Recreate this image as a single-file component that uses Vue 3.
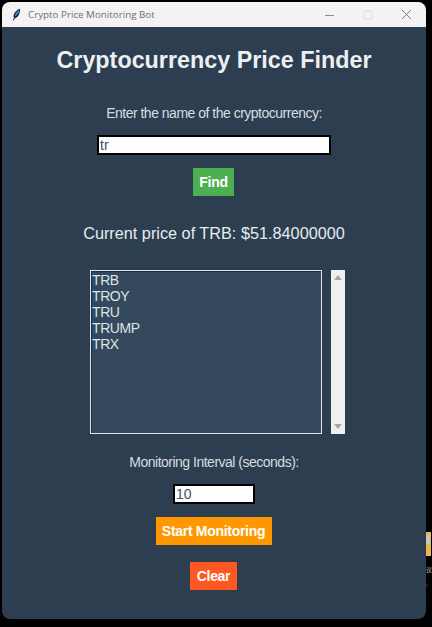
<script setup>
import { ref } from 'vue'

const query = ref('tr')
const interval = ref('10')
const symbols = ['TRB', 'TROY', 'TRU', 'TRUMP', 'TRX']
</script>

<template>
  <div class="desktop">
    <div class="window">
      <div class="titlebar">
        <svg class="feather" width="9" height="13" viewBox="1 0 10 16">
          <path d="M10.5 0.8C7 1.6 3.6 4.6 2.6 8.4 2.2 10 2.4 11.2 2.9 12L1.6 15.2 2.7 15.4 3.9 12.5C6.4 12.4 8.4 10.2 9.4 7.2 10 5.2 10.6 3 10.5 0.8Z" fill="#10233f" />
          <path d="M9.6 2C7 3.4 4.2 6 3.5 10.6 6 9.8 8.2 7.4 9 5Z" fill="#3f7fd0" />
        </svg>
        <span class="wintitle">Crypto Price Monitoring Bot</span>
        <div class="winbtns">
          <svg width="10" height="10" viewBox="0 0 10 10"><path d="M0 5.5H9" stroke="#8b8b8b" stroke-width="1" fill="none" /></svg>
          <svg width="10" height="10" viewBox="0 0 10 10"><rect x="1" y="1" width="8" height="8" rx="1" stroke="#dcdcdc" fill="none" /></svg>
          <svg width="11" height="11" viewBox="0 0 11 11"><path d="M1 1L10 10M10 1L1 10" stroke="#7c7c7c" stroke-width="1" fill="none" /></svg>
        </div>
      </div>

      <div class="content">
        <h1>Cryptocurrency Price Finder</h1>
        <label class="lbl first">Enter the name of the cryptocurrency:</label>
        <input v-model="query" class="entry wide" type="text" />
        <button class="btn find">Find</button>
        <p class="price">Current price of TRB: $51.84000000</p>

        <div class="listrow">
          <ul class="listbox">
            <li v-for="s in symbols" :key="s">{{ s }}</li>
          </ul>
          <div class="scroll">
            <span class="arrow up"></span>
            <span class="arrow down"></span>
          </div>
        </div>

        <label class="lbl interval">Monitoring Interval (seconds):</label>
        <input v-model="interval" class="entry short" type="text" />
        <button class="btn start">Start Monitoring</button>
        <button class="btn clear">Clear</button>
      </div>
    </div>

    <!-- bits of whatever is behind the window -->
    <div class="behind">
      <span class="sliver"><i></i></span>
      <span class="crumb one">议</span>
      <span class="crumb two">:</span>
    </div>
  </div>
</template>

<style>
html, body {
  margin: 0;
  background: #000;
}
</style>

<style scoped>
.desktop {
  position: relative;
  width: 432px;
  height: 627px;
  box-sizing: border-box;
  padding: 2px 6px 8px 2px;
  background: #000;
  overflow: hidden;
  font-family: "Liberation Sans", Arial, sans-serif;
}
.window {
  height: 100%;
  display: flex;
  flex-direction: column;
  border-radius: 8px;
  overflow: hidden;
  background: #2c3e50;
}
.titlebar {
  height: 25px;
  flex: none;
  display: flex;
  align-items: center;
  padding: 0 14px 0 10px;
  background: #f3f3f3;
}
.feather {
  flex: none;
}
.wintitle {
  margin-left: 7px;
  font-family: "Open Sans", "Noto Sans", sans-serif;
  font-size: 9.8px;
  color: #6f7174;
}
.winbtns {
  margin-left: auto;
  display: flex;
  align-items: center;
  gap: 28px;
}
.content {
  flex: 1;
  display: flex;
  flex-direction: column;
  align-items: center;
  color: #ecf0f1;
}
h1 {
  margin: 19px 0 0;
  font-size: 23.33px;
  line-height: 28px;
  font-weight: 700;
  color: #ecf0f1;
}
.lbl {
  font-size: 14px;
  line-height: 16px;
  letter-spacing: -0.5px;
  color: #d6dde0;
}
.first {
  margin-top: 31px;
}
.entry {
  box-sizing: border-box;
  display: block;
  margin: 0;
  padding: 0 0 0 1px;
  border: 2px solid #000;
  border-radius: 0;
  outline: none;
  background: #fff;
  font-family: "Liberation Sans", Arial, sans-serif;
  font-size: 14px;
  color: #3c4f64;
}
.wide {
  width: 234px;
  height: 20px;
  margin-top: 14px;
}
.short {
  width: 82px;
  height: 20px;
  margin-top: 14px;
}
.btn {
  display: block;
  height: 28px;
  margin: 0 1px 0 0;
  padding: 0;
  border: 0;
  border-radius: 0;
  font-family: "Liberation Sans", Arial, sans-serif;
  font-size: 14px;
  letter-spacing: -0.3px;
  font-weight: 700;
  white-space: nowrap;
  color: #fff;
}
.find {
  width: 41px;
  margin-top: 13px;
  background: #4caf50;
}
.price {
  margin: 27px 0 0;
  font-size: 16.25px;
  line-height: 20px;
  color: #e6ecee;
}
.listrow {
  display: flex;
  margin-top: 27px;
  margin-left: 7px;
  gap: 9px;
}
.listbox {
  box-sizing: border-box;
  width: 232px;
  height: 164px;
  margin: 0;
  padding: 1px 0 0;
  list-style: none;
  border: 1px solid #dfe5e8;
  box-shadow: inset 1px 1px 0 #1f2d3a;
  background: #34495e;
  font-size: 14px;
  line-height: 16px;
  letter-spacing: -0.4px;
  color: #dfe4e7;
}
.listbox li {
  padding-left: 1px;
}
.scroll {
  box-sizing: border-box;
  width: 14px;
  height: 164px;
  display: flex;
  flex-direction: column;
  justify-content: space-between;
  align-items: center;
  padding: 5px 0;
  background: #f0f0f0;
}
.arrow {
  width: 0;
  height: 0;
  border-left: 4px solid transparent;
  border-right: 4px solid transparent;
}
.up {
  border-bottom: 5px solid #a8a8a8;
}
.down {
  border-top: 5px solid #a8a8a8;
}
.interval {
  margin-top: 20px;
}
.start {
  width: 116px;
  margin-top: 13px;
  background: #ff9800;
}
.clear {
  width: 47px;
  margin-top: 17px;
  background: #ff5722;
}
.behind {
  position: absolute;
  left: 426px;
  top: 532px;
  width: 6px;
  height: 60px;
}
.sliver {
  position: absolute;
  left: 0;
  top: 0;
  width: 5px;
  height: 24px;
  background: #e8b94a;
}
.sliver i {
  display: block;
  width: 4px;
  height: 9px;
  margin-top: 3px;
  background: #c9c7c0;
}
.crumb {
  position: absolute;
  left: 0;
  font-family: "Noto Sans CJK SC", sans-serif;
  font-size: 6px;
  line-height: 10px;
  color: #b9c4cc;
}
.one {
  top: 33px;
}
.two {
  top: 48px;
  color: #c98a4a;
}
</style>
